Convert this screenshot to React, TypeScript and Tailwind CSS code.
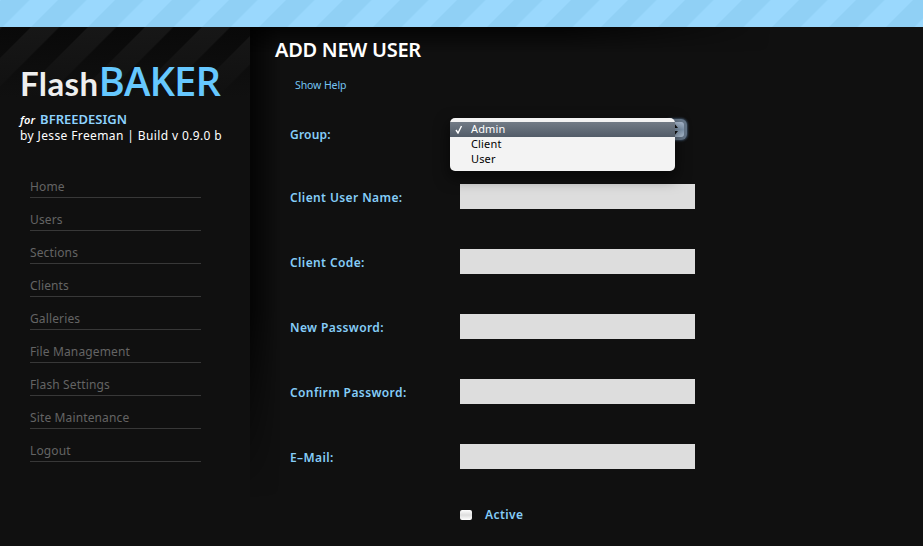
const nav = ["Home", "Users", "Sections", "Clients", "Galleries", "File Management", "Flash Settings", "Site Maintenance", "Logout"];
const fields = ["Client User Name:", "Client Code:", "New Password:", "Confirm Password:", "E–Mail:"];

export default function App() {
  return (
    <div className="flex h-[546px] w-[923px] flex-col overflow-hidden bg-[#101010] font-['Noto_Sans',sans-serif]">
      <header className="h-[27px] shrink-0 bg-[#9ad8fd]">
        <svg width="923" height="27" className="block">
          <defs>
            <pattern id="blue" width="57" height="100" patternUnits="userSpaceOnUse" patternTransform="translate(58 0) skewX(-45)">
              <rect width="28.5" height="100" fill="#90d0f5" />
            </pattern>
          </defs>
          <rect width="923" height="27" fill="url(#blue)" />
        </svg>
      </header>
      <div className="flex flex-1">
        <aside className="relative w-[250px] shrink-0">
          <svg width="250" height="70" className="absolute left-0 top-0">
            <defs>
              <pattern id="dark" width="57" height="200" patternUnits="userSpaceOnUse" patternTransform="translate(31 0) skewX(-45)">
                <rect width="28.5" height="200" fill="#171717" />
                <rect x="28.5" width="28.5" height="200" fill="#090909" />
              </pattern>
              <linearGradient id="fade" x1="0" y1="0" x2="0" y2="1">
                <stop offset="0" stopColor="#101010" stopOpacity="0" />
                <stop offset="1" stopColor="#101010" />
              </linearGradient>
            </defs>
            <rect width="250" height="70" fill="url(#dark)" />
            <rect width="250" height="70" fill="url(#fade)" />
          </svg>
          <div className="relative flex flex-col pl-5 pt-[29px] text-white">
            <h1 className="flex h-[50px] items-baseline whitespace-nowrap leading-[50px]">
              <span className="font-['Lato',sans-serif] text-[33px] font-bold tracking-[0.4px] text-[#eee]">Flash</span>
              <span className="font-['Open_Sans',sans-serif] text-[40px] font-semibold tracking-[-0.9px] text-[#66c8ff]">BAKER</span>
            </h1>
            <p className="mt-[5px] flex h-4 items-baseline gap-[5px] whitespace-nowrap text-[13px] font-semibold leading-4">
              <i className="text-[11px] leading-4 tracking-[0.1px]">for</i>
              <span className="text-[#8dd3ff]">BFREEDESIGN</span>
            </p>
            <p className="mt-px h-4 whitespace-nowrap text-[12px] leading-4 tracking-[0.38px]">by Jesse Freeman | Build v 0.9.0 b</p>
          </div>
          <nav className="ml-[30px] mt-[21px] w-[171px] text-[12px] leading-4 tracking-[0.13px] text-[#646464]">
            {nav.map((n) => (
              <a key={n} className="flex h-[33px] items-end border-b border-[#383838] pb-[2px]">{n}</a>
            ))}
          </nav>
        </aside>
        <main className="relative flex-1">
          <div className="absolute left-0 top-0 h-[470px] w-[30px] bg-gradient-to-r from-black/70 to-transparent [mask-image:linear-gradient(to_bottom,black_60%,transparent)]" />
          <div className="absolute left-0 top-0 h-[25px] w-[520px] bg-gradient-to-b from-black/70 to-transparent [mask-image:linear-gradient(to_right,black_60%,transparent)]" />
          <div className="relative">
            <h2 className="h-[37px] pl-[25px] pt-[9px] text-[20px] font-semibold leading-7 tracking-[-0.27px] text-white">ADD NEW USER</h2>
            <a className="block h-[29px] pl-[45px] pt-[13px] text-[10.5px] leading-4 tracking-[-0.1px] text-[#75c4f2]">Show Help</a>
            <form className="pl-[40px] text-[12px] font-semibold leading-[25px] tracking-[0.4px] text-[#85cdf8]">
              <div className="mt-[28px] flex h-[63px]">
                <label className="w-[170px] pt-px tracking-[0.2px]">Group:</label>
                <div className="relative h-[25px] w-[235px]">
                  <div className="absolute left-[205px] top-[-2px] h-[21px] w-[22px] rounded-[6px] bg-[#66778a] shadow-[0_0_2px_1px_#36475a]">
                    <div className="absolute inset-[3px] rounded-[3px] bg-gradient-to-b from-[#abbbd0] via-[#8198b0] to-[#b5c8dc]" />
                    <svg className="absolute left-[5px] top-[4px]" width="8" height="13" viewBox="0 0 8 13">
                      <path d="M0 5 4 0 8 5ZM0 8 4 13 8 8Z" fill="#111" />
                    </svg>
                  </div>
                  <ul className="absolute left-[-10px] top-[-3px] z-10 h-[53px] w-[225px] rounded-[5px] bg-[#f3f3f3] pt-1 text-[11px] font-normal leading-[13px] tracking-[0.15px] text-black shadow-[0_6px_14px_2px_rgba(0,0,0,0.5)]">
                    <li className="flex h-[15px] items-start bg-gradient-to-b from-[#727b86] to-[#525c68] text-white">
                      <svg className="ml-[5px] mr-[8px] mt-[3px]" width="8" height="9" viewBox="0 0 8 9">
                        <path d="M1 5 3 8 6.5 1" fill="none" stroke="#fff" strokeWidth="1.4" />
                      </svg>
                      Admin
                    </li>
                    <li className="h-[15px] pl-[21px]">Client</li>
                    <li className="h-[15px] pl-[21px]">User</li>
                  </ul>
                </div>
              </div>
              {fields.map((f) => (
                <div key={f} className="flex h-[65px] items-start">
                  <label className="w-[170px] pt-px">{f}</label>
                  <div className="h-[25px] w-[235px] bg-[#dddddd]" />
                </div>
              ))}
              <div className="-mt-[7px] flex h-[25px] items-center pl-[170px]">
                <span className="h-[10px] w-[12px] rounded-[2px] bg-gradient-to-b from-white via-[#dedede] to-white" />
                <label className="ml-[13px]">Active</label>
              </div>
            </form>
          </div>
        </main>
      </div>
    </div>
  );
}
